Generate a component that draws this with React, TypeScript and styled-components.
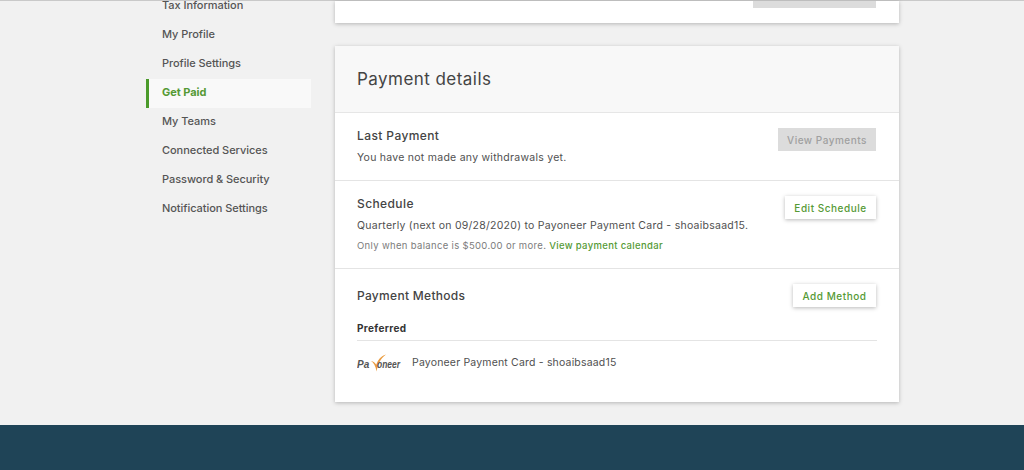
import React from 'react'
import styled, { createGlobalStyle } from 'styled-components'

const GlobalStyle = createGlobalStyle`
  html, body {
    margin: 0;
    height: 100%;
    overflow: hidden;
    background: #f1f1f1;
    font-family: Inter, "Liberation Sans", sans-serif;
  }
`

const Page = styled.div`
  width: 1024px;
  height: 470px;
  display: flex;
  flex-direction: column;
  overflow: hidden;
`

const TopLine = styled.div`
  height: 1px;
  flex: none;
  background: #c9c9c9;
`

const Body = styled.div`
  height: 424px;
  flex: none;
  display: flex;
  align-items: flex-start;
  padding-left: 146px;
  gap: 24px;
`

const Sidebar = styled.nav`
  width: 165px;
  flex: none;
  margin-top: -9px;
  display: flex;
  flex-direction: column;
`

const NavItem = styled.a<{ $active?: boolean }>`
  height: 29px;
  display: flex;
  align-items: center;
  box-sizing: border-box;
  padding-left: ${(p) => (p.$active ? '13px' : '16px')};
  padding-bottom: 3px;
  border-left: ${(p) => (p.$active ? '3px solid #4a9a2a' : '0')};
  background: ${(p) => (p.$active ? '#f9f9f9' : 'transparent')};
  color: ${(p) => (p.$active ? '#559a35' : '#555')};
  font-size: 11px;
  font-weight: ${(p) => (p.$active ? 700 : 500)};
  letter-spacing: -0.05px;
`

const Main = styled.main`
  width: 564px;
  flex: none;
  display: flex;
  flex-direction: column;
  gap: 23px;
`

const Card = styled.section`
  background: #fff;
  box-shadow: 0 1px 4px rgba(0, 0, 0, 0.25);
`

const TopCard = styled(Card)`
  height: 22px;
  display: flex;
  justify-content: flex-end;
  align-items: flex-start;
  padding-right: 23px;
`

const TopCardButton = styled.div`
  width: 123px;
  height: 7px;
  background: #dcdcdc;
`

const CardHeader = styled.header`
  height: 67px;
  display: flex;
  align-items: center;
  box-sizing: border-box;
  padding: 0 22px 1px;
  background: #f8f8f8;
  border-bottom: 1px solid #e6e6e6;
`

const CardTitle = styled.h2`
  margin: 0;
  color: #444;
  font-size: 17px;
  font-weight: 400;
  letter-spacing: 0.45px;
`

const Section = styled.div<{ $height: number; $border?: boolean }>`
  height: ${(p) => p.$height}px;
  box-sizing: border-box;
  padding: 15px 22px 0;
  border-bottom: ${(p) => (p.$border ? '1px solid #e4e4e4' : '0')};
`

const SectionRow = styled.div`
  display: flex;
  justify-content: space-between;
  align-items: flex-start;
`

const MethodsRow = styled(SectionRow)`
  align-items: center;
`

const SectionTitle = styled.h3`
  margin: 0 0 7px;
  color: #444;
  font-size: 12px;
  line-height: 16px;
  font-weight: 500;
  letter-spacing: 0.4px;
`

const MethodsTitle = styled(SectionTitle)`
  margin: 0;
  letter-spacing: 0.3px;
`

const BodyText = styled.p`
  margin: 0;
  color: #505050;
  font-size: 10.5px;
  line-height: 14px;
  letter-spacing: 0.26px;
`

const MethodText = styled(BodyText)`
  letter-spacing: 0.18px;
`

const NoteText = styled.p`
  margin: 6px 0 0;
  color: #7c7c7c;
  font-size: 9.5px;
  line-height: 14px;
  letter-spacing: 0.33px;
`

const GreenLink = styled.a`
  color: #559a35;
  font-weight: 500;
`

const DisabledButton = styled.button`
  width: 98px;
  height: 23px;
  border: 0;
  padding: 0;
  margin-right: 1px;
  background: #dcdcdc;
  color: #a0a0a0;
  font: 500 10px Inter, "Liberation Sans", sans-serif;
  letter-spacing: 0.5px;
`

const ActionButton = styled.button<{ $width: number }>`
  width: ${(p) => p.$width}px;
  height: 23px;
  border: 0;
  padding: 0;
  margin-right: 1px;
  background: #fff;
  box-shadow: 0 1px 4px rgba(0, 0, 0, 0.28);
  color: #559a35;
  font: 500 10px Inter, "Liberation Sans", sans-serif;
  letter-spacing: 0.52px;
`

const PreferredLabel = styled.div`
  margin-top: 14px;
  padding-bottom: 5px;
  border-bottom: 1px solid #e4e4e4;
  color: #333;
  font-size: 10px;
  line-height: 14px;
  font-weight: 700;
  letter-spacing: 0.35px;
`

const MethodRow = styled.div`
  display: flex;
  align-items: center;
  gap: 11px;
  margin-top: 13px;
  height: 18px;
`

const Footer = styled.footer`
  flex: 1;
  background: #1f4457;
`

const navItems = [
  'Tax Information',
  'My Profile',
  'Profile Settings',
  'Get Paid',
  'My Teams',
  'Connected Services',
  'Password & Security',
  'Notification Settings',
]

const PayoneerLogo: React.FC = () => (
  <svg width="44" height="18" viewBox="0 0 44 18" aria-label="Payoneer">
    <path d="M14 7c2.600 1.500 4.600 5 5.600 10.500 1-5.800 3.500-13 9.400-17-5.700 2-8.500 6-9.700 10.300C18.200 8.800 16.400 7.400 14 7z" fill="#eb9c3f" />
    <text x="0" y="13.500" fontFamily="'Liberation Sans', sans-serif" fontSize="10" fontStyle="italic" fontWeight="700" fill="#555">Pa</text>
    <text x="20" y="13.500" fontFamily="'Liberation Sans', sans-serif" fontSize="10" fontStyle="italic" fontWeight="700" fill="#555" textLength="23" lengthAdjust="spacingAndGlyphs">oneer</text>
  </svg>
)

const App: React.FC = () => (
  <Page>
    <GlobalStyle />
    <TopLine />
    <Body>
      <Sidebar>
        {navItems.map((item) => (
          <NavItem key={item} $active={item === 'Get Paid'}>
            {item}
          </NavItem>
        ))}
      </Sidebar>
      <Main>
        <TopCard>
          <TopCardButton />
        </TopCard>
        <Card>
          <CardHeader>
            <CardTitle>Payment details</CardTitle>
          </CardHeader>
          <Section $height={68} $border>
            <SectionRow>
              <div>
                <SectionTitle>Last Payment</SectionTitle>
                <BodyText>You have not made any withdrawals yet.</BodyText>
              </div>
              <DisabledButton>View Payments</DisabledButton>
            </SectionRow>
          </Section>
          <Section $height={88} $border>
            <SectionRow>
              <div>
                <SectionTitle>Schedule</SectionTitle>
                <BodyText>Quarterly (next on 09/28/2020) to Payoneer Payment Card - shoaibsaad15.</BodyText>
                <NoteText>
                  Only when balance is $500.00 or more. <GreenLink>View payment calendar</GreenLink>
                </NoteText>
              </div>
              <ActionButton $width={91}>Edit Schedule</ActionButton>
            </SectionRow>
          </Section>
          <Section $height={133}>
            <MethodsRow>
              <MethodsTitle>Payment Methods</MethodsTitle>
              <ActionButton $width={83}>Add Method</ActionButton>
            </MethodsRow>
            <PreferredLabel>Preferred</PreferredLabel>
            <MethodRow>
              <PayoneerLogo />
              <MethodText>Payoneer Payment Card - shoaibsaad15</MethodText>
            </MethodRow>
          </Section>
        </Card>
      </Main>
    </Body>
    <Footer />
  </Page>
)

export default App
